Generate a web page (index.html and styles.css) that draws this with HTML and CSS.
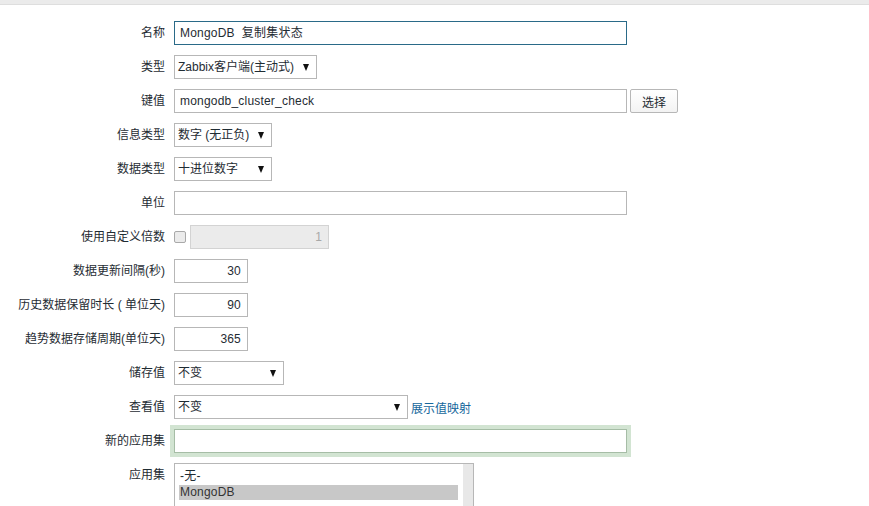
FILE: index.html
```html
<!DOCTYPE html>
<html lang="zh">
<head>
<meta charset="utf-8">
<title>监控项</title>
<link rel="stylesheet" href="styles.css">
</head>
<body>
<div class="topbar"></div>
<form class="form">
  <div class="row">
    <label class="lbl">名称</label>
    <div class="field"><div class="input w-long focused">MongoDB&nbsp; 复制集状态</div></div>
  </div>
  <div class="row">
    <label class="lbl">类型</label>
    <div class="field"><div class="select w-type"><span>Zabbix客户端(主动式)</span><i class="arrow"></i></div></div>
  </div>
  <div class="row">
    <label class="lbl">键值</label>
    <div class="field"><div class="input w-long">mongodb_cluster_check</div><button type="button" class="btn">选择</button></div>
  </div>
  <div class="row">
    <label class="lbl">信息类型</label>
    <div class="field"><div class="select w-info"><span>数字 (无正负)</span><i class="arrow"></i></div></div>
  </div>
  <div class="row">
    <label class="lbl">数据类型</label>
    <div class="field"><div class="select w-info"><span>十进位数字</span><i class="arrow"></i></div></div>
  </div>
  <div class="row">
    <label class="lbl">单位</label>
    <div class="field"><div class="input w-long"></div></div>
  </div>
  <div class="row">
    <label class="lbl">使用自定义倍数</label>
    <div class="field"><span class="check"></span><div class="input w-mult disabled num">1</div></div>
  </div>
  <div class="row">
    <label class="lbl">数据更新间隔(秒)</label>
    <div class="field"><div class="input w-num num">30</div></div>
  </div>
  <div class="row">
    <label class="lbl">历史数据保留时长 ( 单位天)</label>
    <div class="field"><div class="input w-num num">90</div></div>
  </div>
  <div class="row">
    <label class="lbl">趋势数据存储周期(单位天)</label>
    <div class="field"><div class="input w-num num">365</div></div>
  </div>
  <div class="row">
    <label class="lbl">储存值</label>
    <div class="field"><div class="select w-store"><span>不变</span><i class="arrow"></i></div></div>
  </div>
  <div class="row">
    <label class="lbl">查看值</label>
    <div class="field"><div class="select w-view"><span>不变</span><i class="arrow"></i></div><a class="link" href="#">展示值映射</a></div>
  </div>
  <div class="row">
    <label class="lbl">新的应用集</label>
    <div class="field"><div class="input w-long glow"></div></div>
  </div>
  <div class="row row-top">
    <label class="lbl">应用集</label>
    <div class="field">
      <div class="listbox">
        <div class="items">
          <div class="item">-无-</div>
          <div class="item sel">MongoDB</div>
        </div>
        <div class="scroll"></div>
      </div>
    </div>
  </div>
</form>
</body>
</html>
```
FILE: styles.css
```css
html, body {
  margin: 0;
  padding: 0;
  background: #fff;
  font-family: "Liberation Sans", "Noto Sans CJK SC", sans-serif;
  font-size: 12px;
  color: #1f2c33;
  overflow: hidden;
}
.topbar {
  height: 4px;
  background: #ebebeb;
  border-bottom: 1px solid #dedede;
}
.form {
  display: flex;
  flex-direction: column;
  gap: 10px;
  padding-top: 16px;
}
.row {
  display: grid;
  grid-template-columns: 165px 1fr;
  column-gap: 9px;
  align-items: center;
}
.row-top {
  align-items: start;
}
.lbl {
  text-align: right;
  line-height: 24px;
  white-space: nowrap;
}
.field {
  display: flex;
  align-items: center;
  gap: 3px;
}
.input, .select {
  box-sizing: border-box;
  height: 24px;
  border: 1px solid #b7b7b7;
  background: #fff;
  line-height: 22px;
  padding: 0 5px;
  white-space: nowrap;
  overflow: hidden;
}
.input {
  letter-spacing: 0.2px;
}
.focused {
  border-color: #2a6a88;
}
.w-long { width: 453px; }
.w-type { width: 143px; }
.w-info { width: 98px; }
.w-store { width: 110px; }
.w-view { width: 234px; }
.w-num { width: 74px; }
.w-mult { width: 139px; }
.num {
  text-align: right;
  padding-right: 6px;
}
.disabled {
  background: #ebebeb;
  border-color: #d3d3d3;
  color: #a8a8a8;
}
.select {
  display: flex;
  align-items: center;
  justify-content: space-between;
  padding: 0 5px 0 3px;
}
.arrow {
  flex: none;
  width: 0;
  height: 0;
  border-left: 3px solid transparent;
  border-right: 3px solid transparent;
  border-top: 7px solid #111;
  margin: 0 2px 0 6px;
}
.btn {
  box-sizing: border-box;
  width: 48px;
  height: 24px;
  border: 1px solid #b7b7b7;
  border-radius: 2px;
  background: linear-gradient(#fff, #f3f3f3);
  font: inherit;
  color: #1f2c33;
  padding: 0;
}
.check {
  box-sizing: border-box;
  width: 12px;
  height: 12px;
  border: 1px solid #a9a9a9;
  border-radius: 2px;
  background: #ebebeb;
  margin-right: 1px;
}
.link {
  color: #16679c;
  text-decoration: none;
}
.glow {
  box-shadow: 0 0 0 4px #d2e4d2;
  border-color: #a6bda6;
}
.listbox {
  box-sizing: border-box;
  width: 300px;
  height: 60px;
  border: 1px solid #b7b7b7;
  display: flex;
  background: #fff;
}
.items {
  flex: 1;
  padding: 5px 5px 0 4px;
}
.item {
  height: 15px;
  line-height: 15px;
  padding-left: 1px;
  letter-spacing: 0.2px;
}
.item.sel {
  background: #c8c8c8;
  color: #333;
  margin-top: 1px;
}
.scroll {
  width: 10px;
  background: #e8e8e8;
}
```
